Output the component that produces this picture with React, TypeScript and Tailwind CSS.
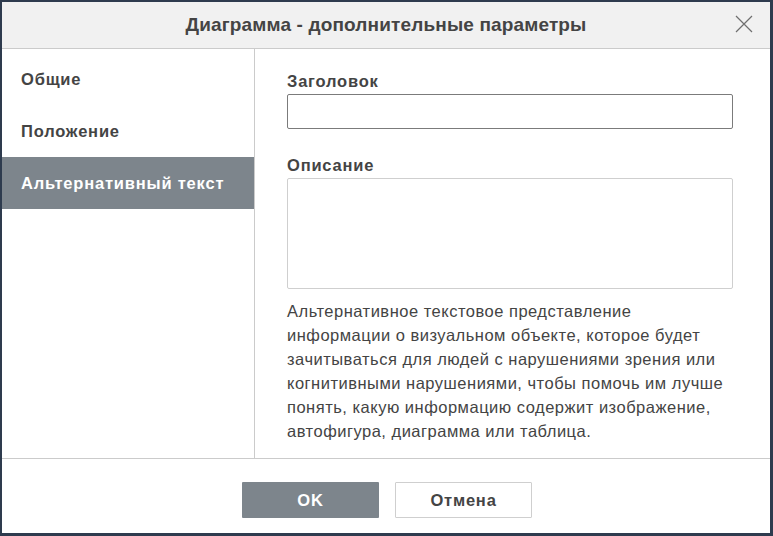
const menu = ["Общие", "Положение", "Альтернативный текст"];

const CloseIcon = () => (
  <svg viewBox="0 0 18 18" width="18" height="18" fill="none" stroke="#6f6f6f" strokeWidth="1.2" aria-hidden="true">
    <path d="M1 1l16 16M17 1L1 17" />
  </svg>
);

export default function App() {
  const active = 2;
  return (
    <div className="flex h-[536px] w-[773px] flex-col border-b-[3px] border-l-2 border-r-[3px] border-t-2 border-[#2e3b4e] bg-white font-['Liberation_Sans',Arial,sans-serif] text-[#444]">
      <div className="relative flex h-[47px] shrink-0 items-center justify-center border-b border-[#cbcbcb] bg-[#f1f1f1]">
        <span className="text-[19px] font-bold tracking-[0.15px] text-[#444]">
          Диаграмма - дополнительные параметры
        </span>
        <button type="button" aria-label="Закрыть" className="absolute right-[17px] top-[13px]">
          <CloseIcon />
        </button>
      </div>

      <div className="flex min-h-0 flex-1">
        <div className="w-[253px] shrink-0 border-r border-[#cbcbcb] pt-[4px]">
          {menu.map((item, i) => (
            <div
              key={item}
              className={
                i === active
                  ? "flex h-[52px] items-center bg-[#7d858c] px-[19px] text-[16.5px] font-bold tracking-[0.8px] text-white"
                  : "flex h-[52px] items-center px-[19px] text-[16.5px] font-bold tracking-[0.8px] text-[#444]"
              }
            >
              {item}
            </div>
          ))}
        </div>

        <div className="flex-1 pl-[32px] pr-[37px] pt-[23px]">
          <div className="text-[16.5px] font-bold leading-[19px] tracking-[0.8px]">Заголовок</div>
          <div className="mt-[3px] h-[35px] rounded-[2px] border border-[#7b7b7b]" />
          <div className="mt-[27px] text-[16.5px] font-bold leading-[19px] tracking-[0.8px]">Описание</div>
          <div className="mt-[3px] h-[111px] rounded-[2px] border border-[#cfcfcf]" />
          <p className="mt-[10px] text-[16.5px] leading-[24px] tracking-[0.5px] text-[#444]">
            Альтернативное текстовое представление
            <br />
            информации о визуальном объекте, которое будет
            <br />
            зачитываться для людей с нарушениями зрения или
            <br />
            когнитивными нарушениями, чтобы помочь им лучше
            <br />
            понять, какую информацию содержит изображение,
            <br />
            автофигура, диаграмма или таблица.
          </p>
        </div>
      </div>

      <div className="flex h-[75px] shrink-0 justify-center gap-[16px] border-t border-[#cbcbcb] pl-[2px] pt-[23px]">
        <button
          type="button"
          className="h-[36px] w-[137px] rounded-[1px] bg-[#7d858c] text-[16.5px] font-bold tracking-[0.8px] text-white"
        >
          OK
        </button>
        <button
          type="button"
          className="h-[36px] w-[137px] rounded-[1px] border border-[#cfcfcf] bg-white text-[16.5px] font-bold tracking-[0.8px] text-[#444]"
        >
          Отмена
        </button>
      </div>
    </div>
  );
}
